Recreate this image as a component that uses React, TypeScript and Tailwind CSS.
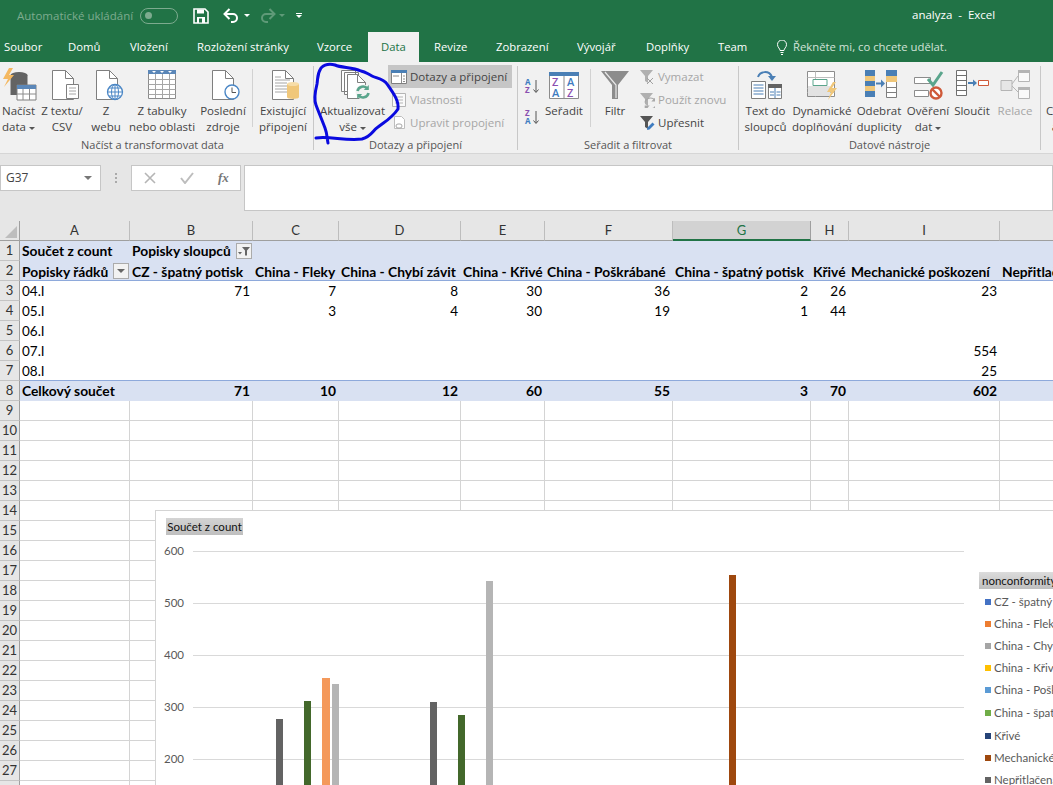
const columns = ["A", "B", "C", "D", "E", "F", "G", "H", "I", "J"];

const pivotHead = ["Popisky řádků", "CZ - špatný potisk", "China - Fleky", "China - Chybí závit", "China - Křivé", "China - Poškrábané", "China - špatný potisk", "Křivé", "Mechanické poškození", "Nepřitlačená"];

const pivotRows = [
  ["04.I", "71", "7", "8", "30", "36", "2", "26", "23", ""],
  ["05.I", "", "3", "4", "30", "19", "1", "44", "", ""],
  ["06.I", "", "", "", "", "", "", "", "", ""],
  ["07.I", "", "", "", "", "", "", "", "554", ""],
  ["08.I", "", "", "", "", "", "", "", "25", ""],
];

const totals = ["Celkový součet", "71", "10", "12", "60", "55", "3", "70", "602", ""];

const gridRows = [9, 10, 11, 12, 13, 14, 15, 16, 17, 18, 19, 20, 21, 22, 23, 24, 25, 26, 27, 28];

const legend = [
  ["CZ - špatný potisk", "#4472c4", 92],
  ["China - Fleky", "#ed7d31", 114],
  ["China - Chybí závit", "#a5a5a5", 136],
  ["China - Křivé", "#ffc000", 158],
  ["China - Poškrábané", "#5b9bd5", 180],
  ["China - špatný potisk", "#70ad47", 203],
  ["Křivé", "#264478", 226],
  ["Mechanické poškození", "#9e480e", 248],
  ["Nepřitlačená", "#636363", 270],
] as const;

const bars = [
  [121, 209, "#636363", 7],
  [149, 191, "#43682b", 7],
  [167, 168, "#f4995b", 8],
  [177, 174, "#b5b5b5", 7],
  [275, 192, "#636363", 7],
  [303, 205, "#43682b", 7],
  [331, 71, "#b5b5b5", 7],
  [574, 65, "#9e480e", 7],
] as const;

const axis = [
  ["600", 41],
  ["500", 93],
  ["400", 145],
  ["300", 197],
  ["200", 249],
] as const;

function Page({ x, y = 4, w = 21, h = 29, stroke = "#7f7f7f" }: { x: number; y?: number; w?: number; h?: number; stroke?: string }) {
  return (
    <g fill="#fff" stroke={stroke}>
      <path d={`M${x + 0.5} ${y + 0.5}h${w - 8}l8 8v${h - 8}h${-w}z`} />
      <path d={`M${x + w - 7.5} ${y + 0.5}v8h8`} fill="none" />
    </g>
  );
}

function LargeIcon({ children }: { children: React.ReactNode }) {
  return (
    <svg width="36" height="36" viewBox="0 0 36 36" className="shrink-0">
      {children}
    </svg>
  );
}

function SmallIcon({ children }: { children: React.ReactNode }) {
  return (
    <svg width="16" height="16" viewBox="0 0 16 16" className="shrink-0">
      {children}
    </svg>
  );
}

function Refresh({ cx, cy, color = "#5aa58c", width = 2.6 }: { cx: number; cy: number; color?: string; width?: number }) {
  return (
    <g transform={`translate(${cx} ${cy})`} fill="none" stroke={color} strokeWidth={width}>
      <path d="M-5.5 -1a5.6 5.6 0 0 1 10 -2.2" />
      <path d="M5.5 1a5.6 5.6 0 0 1 -10 2.2" />
      <path d="M5.8 -7v5h-5z" fill={color} stroke="none" />
      <path d="M-5.8 7v-5h5z" fill={color} stroke="none" />
    </g>
  );
}

function LargeButton({ icon, lines, w, caret, muted }: { icon: React.ReactNode; lines: string[]; w: string; caret?: boolean; muted?: boolean }) {
  return (
    <div className={`flex flex-col items-center shrink-0 ${w} ${muted ? "text-[#a6a6a6]" : "text-[#444]"}`}>
      <div className="h-[37px] flex items-start">{icon}</div>
      {lines.map((line, i) => (
        <div key={line} className="h-[16px] leading-[16px] whitespace-nowrap flex items-center">
          {line}
          {caret && i === lines.length - 1 && <span className="ml-[3px] mt-[2px] border-x-[3px] border-t-[3px] border-x-transparent border-t-[#555]" />}
        </div>
      ))}
    </div>
  );
}

function SmallButton({ icon, label, muted, active }: { icon: React.ReactNode; label: string; muted?: boolean; active?: boolean }) {
  return (
    <div className={`h-[23px] flex items-center gap-[3px] pl-[3px] whitespace-nowrap ${active ? "bg-[#c6c6c6]" : ""} ${muted ? "text-[#a6a6a6]" : "text-[#444]"}`}>
      {icon}
      <span>{label}</span>
    </div>
  );
}

function Group({ label, w, labelPad, children }: { label: string; w: string; labelPad?: string; children: React.ReactNode }) {
  return (
    <div className={`${w} shrink-0 h-[84px] flex flex-col border-r border-[#c8c8c8]`}>
      <div className="h-[72px] flex">{children}</div>
      <div className={`h-[12px] leading-[14px] text-[11px] text-center text-[#555] whitespace-nowrap ${labelPad ?? ""}`}>{label}</div>
    </div>
  );
}

function Divider() {
  return <div className="w-px h-[58px] mt-[3px] bg-[#d2d2d2] shrink-0" />;
}

function Funnel({ color = "#a6a6a6" }: { color?: string }) {
  return <path d="M1 1h13l-5 6v7l-3 -2v-5z" fill={color} />;
}

function DropButton({ filter }: { filter?: boolean }) {
  return (
    <span className="w-[16px] h-[16px] shrink-0 border border-[#ababab] bg-[#f2f2f2] flex items-center justify-center">
      {filter ? (
        <svg width="14" height="14" viewBox="0 0 14 14">
          <path d="M5 3h8l-3 3.500v5h-2v-5z" fill="#666" />
          <path d="M1 8h4l-2 2.500z" fill="#666" />
        </svg>
      ) : (
        <span className="border-x-[4px] border-t-[4px] border-x-transparent border-t-[#666]" />
      )}
    </span>
  );
}

function RowHead({ n }: { n: number }) {
  return (
    <div className="h-[20px] border-r border-b border-r-[#9f9f9f] border-b-[#c4c4c4] bg-[#e6e6e6] text-[#333] text-[13px] font-normal leading-[19px] text-center font-['Lato']">
      {n}
    </div>
  );
}

export default function App() {
  return (
    <div className="relative w-[1053px] h-[785px] overflow-hidden bg-white font-['Open_Sans',sans-serif] text-[11.5px]">
      {/* title bar */}
      <div className="h-[32px] bg-[#217346] flex items-center pb-[1px] text-white">
        <span className="ml-[17px] w-[116px] text-[#7dab8f] whitespace-nowrap">Automatické ukládání</span>
        <span className="ml-[7px] w-[38px] h-[16px] rounded-full border border-[#7dab8f] flex items-center pl-[4px]">
          <span className="w-[7px] h-[7px] rounded-full bg-[#7dab8f]" />
        </span>
        <svg width="16" height="16" viewBox="0 0 16 16" className="ml-[15px]">
          <path d="M1 1h11l3 3v11h-14z" fill="none" stroke="#fff" strokeWidth="1.600" />
          <path d="M4 1.500h7v4h-7zM4 9h8v6h-8z" fill="#fff" />
          <path d="M6 10.500h3v4h-3z" fill="#217346" />
        </svg>
        <svg width="18" height="16" viewBox="0 0 18 16" className="ml-[14px]">
          <path d="M2 6h8a4 4 0 0 1 0 8h-2" fill="none" stroke="#fff" strokeWidth="2" />
          <path d="M6.500 1l-5 5 5 5" fill="none" stroke="#fff" strokeWidth="2" />
        </svg>
        <span className="ml-[3px] border-x-[3px] border-t-[3px] border-x-transparent border-t-white" />
        <svg width="18" height="16" viewBox="0 0 18 16" className="ml-[8px]">
          <path d="M16 6h-8a4 4 0 0 0 0 8h2" fill="none" stroke="#5f9a78" strokeWidth="2" />
          <path d="M11.500 1l5 5-5 5" fill="none" stroke="#5f9a78" strokeWidth="2" />
        </svg>
        <span className="ml-[3px] border-x-[3px] border-t-[3px] border-x-transparent border-t-[#5f9a78]" />
        <span className="ml-[11px] flex flex-col items-center gap-[1px]">
          <span className="w-[6px] h-px bg-white" />
          <span className="border-x-[3px] border-t-[3px] border-x-transparent border-t-white" />
        </span>
        <span className="ml-[610px] mb-[2px] whitespace-pre">analyza  -  Excel</span>
      </div>

      {/* tabs */}
      <div className="h-[30px] bg-[#217346] flex pl-[4px] text-white text-[11.3px] leading-[30px] whitespace-nowrap">
        <div className="w-[64px]">Soubor</div>
        <div className="w-[62px]">Domů</div>
        <div className="w-[67px]">Vložení</div>
        <div className="w-[120px]">Rozložení stránky</div>
        <div className="w-[51px]">Vzorce</div>
        <div className="w-[51px] bg-[#f1f1f1] text-[#217346] text-center">Data</div>
        <div className="w-[77px] pl-[15px]">Revize</div>
        <div className="w-[81px]">Zobrazení</div>
        <div className="w-[69px]">Vývojář</div>
        <div className="w-[72px]">Doplňky</div>
        <div className="w-[59px]">Team</div>
        <div className="flex items-center gap-[6px] text-[#d3e3d9]">
          <svg width="10" height="15" viewBox="0 0 10 15">
            <path d="M3 10.500c0-2-2.500-3-2.500-6a4.500 4.500 0 0 1 9 0c0 3-2.500 4-2.500 6z" fill="none" stroke="#fff" />
            <path d="M3.500 12.500h3M4 14.500h2" stroke="#fff" />
          </svg>
          Řekněte mi, co chcete udělat.
        </div>
      </div>

      {/* ribbon */}
      <div className="h-[92px] bg-[#f1f1f1] border-b border-[#d6d6d6] pt-[4px] flex overflow-hidden">
        <Group label="Načíst a transformovat data" w="w-[314px]" labelPad="pr-[8px]">
          <LargeButton
            w="w-[37px]"
            lines={["Načíst", "data"]}
            caret
            icon={
              <LargeIcon>
                <ellipse cx="18" cy="9" rx="8.500" ry="3" fill="#636363" />
                <path d="M9.500 9v20h17v-20z" fill="#636363" />
                <path d="M8 2l-6 11h5l-4 8 10-12h-5l4-7z" fill="#f4b860" />
                <path d="M16 19h19v15h-19z" fill="#fff" stroke="#7f7f7f" />
                <path d="M16 19h19v4h-19z" fill="#5b87b8" />
                <path d="M16 28h19M22 23v11M28.500 23v11" stroke="#8c8c8c" />
              </LargeIcon>
            }
          />
          <LargeButton
            w="w-[50px]"
            lines={["Z textu/", "CSV"]}
            icon={
              <LargeIcon>
                <Page x={8} />
                <path d="M22.500 18.500h12v14h-12z" fill="#fff" stroke="#7f7f7f" />
                <path d="M25 22h7M25 25h7M25 28h7" stroke="#a6a6a6" />
              </LargeIcon>
            }
          />
          <LargeButton
            w="w-[38px]"
            lines={["Z", "webu"]}
            icon={
              <LargeIcon>
                <Page x={8} />
                <circle cx="27" cy="26" r="7.500" fill="#fff" stroke="#4a86c5" strokeWidth="1.300" />
                <path d="M19.500 26h15M27 18.500v15M21 22h12M21 30h12" stroke="#4a86c5" />
                <ellipse cx="27" cy="26" rx="3.500" ry="7.500" fill="none" stroke="#4a86c5" />
              </LargeIcon>
            }
          />
          <LargeButton
            w="w-[74px]"
            lines={["Z tabulky", "nebo oblasti"]}
            icon={
              <LargeIcon>
                <path d="M4.500 4.500h27v28h-27z" fill="#fff" stroke="#8c8c8c" />
                <path d="M4 4h28v4h-28z" fill="#5b87b8" />
                <path d="M8 5h4l-2 2zM16 5h4l-2 2zM24 5h4l-2 2z" fill="#fff" />
                <path d="M4.500 13.500h27M4.500 18.500h27M4.500 23.500h27M4.500 28.500h27M11.500 8v24M18.500 8v24M25.500 8v24" stroke="#a6a6a6" />
              </LargeIcon>
            }
          />
          <LargeButton
            w="w-[48px]"
            lines={["Poslední", "zdroje"]}
            icon={
              <LargeIcon>
                <Page x={7} />
                <circle cx="27" cy="26" r="7" fill="#fff" stroke="#4a86c5" strokeWidth="1.400" />
                <path d="M27 21.500v5h4" fill="none" stroke="#555" />
              </LargeIcon>
            }
          />
          <div className="w-[5px]" />
          <Divider />
          <div className="w-[4px]" />
          <LargeButton
            w="w-[52px]"
            lines={["Existující", "připojení"]}
            icon={
              <LargeIcon>
                <Page x={7} />
                <path d="M10 11h6M10 14h15M10 17h12M10 20h12M10 23h12M10 26h12" stroke="#a6a6a6" />
                <path d="M22 18v13c0 2.500 12 2.500 12 0v-13z" fill="#f0c77a" />
                <ellipse cx="28" cy="18" rx="6" ry="2" fill="#f7dda8" />
              </LargeIcon>
            }
          />
        </Group>

        <Group label="Dotazy a připojení" w="w-[204px]">
          <div className="w-[4px]" />
          <LargeButton
            w="w-[69px]"
            lines={["Aktualizovat", "vše"]}
            caret
            icon={
              <LargeIcon>
                <path d="M6.500 4.500h14v21h-14zM9.500 6.500h14v22h-14z" fill="#fff" stroke="#7f7f7f" />
                <Page x={12} y={8} w={18} h={24} />
                <circle cx="28" cy="26" r="7.500" fill="#f1f1f1" />
                <Refresh cx={28} cy={26} />
              </LargeIcon>
            }
          />
          <div className="w-[124px] -mt-[1px] ml-[1px]">
            <SmallButton
              active
              label="Dotazy a připojení"
              icon={
                <SmallIcon>
                  <path d="M.500 1.500h15v13h-15z" fill="#fff" stroke="#7f7f7f" />
                  <path d="M0 1h16v3h-16z" fill="#4a7fb5" />
                  <path d="M10.500 4v10M2 7h6M12 7h2M12 10h2M12 12.500h2" stroke="#8c8c8c" />
                </SmallIcon>
              }
            />
            <SmallButton
              muted
              label="Vlastnosti"
              icon={
                <SmallIcon>
                  <path d="M1.500 1.500h13v13h-13z" fill="#fafafa" stroke="#b5b5b5" />
                  <path d="M4 5h8M4 8h8M4 11h8" stroke="#b5b5b5" />
                </SmallIcon>
              }
            />
            <SmallButton
              muted
              label="Upravit propojení"
              icon={
                <SmallIcon>
                  <path d="M3.500 1.500h7l3 3v9h-10z" fill="#fff" stroke="#bdbdbd" />
                  <path d="M5 11a2 2 0 0 1 2-2h2a2 2 0 0 1 0 4h-2a2 2 0 0 1-2-2z" fill="none" stroke="#a6a6a6" />
                </SmallIcon>
              }
            />
          </div>
        </Group>

        <Group label="Seřadit a filtrovat" w="w-[221px]">
          <div className="w-[6px]" />
          <div className="w-[22px] shrink-0 flex flex-col gap-[15px] pt-[12px]">
            <svg width="16" height="16" viewBox="0 0 16 16" className="font-['Open_Sans']">
              <text x="1" y="7" fontSize="8" fontWeight="700" fill="#3f7cc0">A</text>
              <text x="1" y="15" fontSize="8" fontWeight="700" fill="#8a4fb0">Z</text>
              <path d="M12 2v12M9.500 11.500l2.500 3 2.500-3" fill="none" stroke="#555" />
            </svg>
            <svg width="16" height="16" viewBox="0 0 16 16" className="font-['Open_Sans']">
              <text x="1" y="7" fontSize="8" fontWeight="700" fill="#8a4fb0">Z</text>
              <text x="1" y="15" fontSize="8" fontWeight="700" fill="#3f7cc0">A</text>
              <path d="M12 2v12M9.500 11.500l2.500 3 2.500-3" fill="none" stroke="#555" />
            </svg>
          </div>
          <LargeButton
            w="w-[36px]"
            lines={["Seřadit"]}
            icon={
              <svg width="30" height="36" viewBox="0 0 30 36" className="font-['Open_Sans']">
                <path d="M.500 6.500h29v26h-29zM15 8v24" fill="#fff" stroke="#8c8c8c" />
                <path d="M0 6h30v4h-30z" fill="#4a7fb5" />
                <text x="3" y="20" fontSize="11" fontWeight="600" fill="#8a4fb0">Z</text>
                <text x="3" y="31" fontSize="11" fontWeight="600" fill="#3f7cc0">A</text>
                <text x="18" y="20" fontSize="11" fontWeight="600" fill="#3f7cc0">A</text>
                <text x="18" y="31" fontSize="11" fontWeight="600" fill="#8a4fb0">Z</text>
              </svg>
            }
          />
          <div className="w-[8px]" />
          <Divider />
          <LargeButton
            w="w-[48px]"
            lines={["Filtr"]}
            icon={
              <LargeIcon>
                <path d="M4 5h28l-11 14v14h-6v-14z" fill="#8c8c8c" />
                <path d="M8 6l11 13v13" fill="none" stroke="#e8e8e8" strokeWidth="1.200" />
              </LargeIcon>
            }
          />
          <div className="w-[96px] -mt-[1px] -ml-[3px]">
            <SmallButton
              muted
              label="Vymazat"
              icon={
                <SmallIcon>
                  <Funnel color="#b0b0b0" />
                  <path d="M8 9l6 6M14 9l-6 6" stroke="#a0a0a0" />
                </SmallIcon>
              }
            />
            <SmallButton
              muted
              label="Použít znovu"
              icon={
                <SmallIcon>
                  <Funnel color="#b0b0b0" />
                  <Refresh cx={11.500} cy={11.500} color="#a8a8a8" width={1.200} />
                </SmallIcon>
              }
            />
            <SmallButton
              label="Upřesnit"
              icon={
                <SmallIcon>
                  <Funnel color="#555" />
                  <path d="M8 15l.5-2.500 5-5 2 2-5 5z" fill="#3f7cc0" />
                </SmallIcon>
              }
            />
          </div>
        </Group>

        <Group label="Datové nástroje" w="w-[302px]">
          <LargeButton
            w="w-[53px]"
            lines={["Text do", "sloupců"]}
            icon={
              <LargeIcon>
                <path d="M3.500 15.500h14v17h-14z" fill="#fff" stroke="#7f7f7f" />
                <path d="M5.500 19h10M5.500 22h10M5.500 25h10M5.500 28h10" stroke="#4a7fb5" />
                <path d="M20.500 18.500h13v14h-13z" fill="#fff" stroke="#7f7f7f" />
                <path d="M20 18h14v4h-14z" fill="#636363" />
                <path d="M27 22v10M22 26h4M22 29h4M28.500 26h4M28.500 29h4" stroke="#4a7fb5" />
                <path d="M10 11c2-6 11-7 14 0" fill="none" stroke="#4a7fb5" strokeWidth="2" />
                <path d="M20 10h8l-4 5z" fill="#4a7fb5" />
              </LargeIcon>
            }
          />
          <LargeButton
            w="w-[60px]"
            lines={["Dynamické", "doplňování"]}
            icon={
              <LargeIcon>
                <path d="M3.500 5.500h27v25h-27z" fill="#fff" stroke="#8c8c8c" />
                <path d="M3.500 11.500h27M3.500 22.500h27M3.500 26.500h27M11.500 5.500v25" stroke="#bdbdbd" />
                <path d="M9 13.500h14v6h-14z" fill="#fff" stroke="#5aa58c" />
                <path d="M4 20h22v10h-22z" fill="#e2e2e2" />
                <path d="M29 16l-6 10h4l-3 8 9-12h-5l4-6z" fill="#f0c77a" />
              </LargeIcon>
            }
          />
          <LargeButton
            w="w-[54px]"
            lines={["Odebrat", "duplicity"]}
            icon={
              <LargeIcon>
                <path d="M4 4h10v27h-10z" fill="#4a7fb5" />
                <path d="M4 10h10v5h-10zM4 20h10v5h-10z" fill="#f0c77a" />
                <path d="M25.500 4.500h10v27h-10z" fill="#fff" stroke="#7f7f7f" />
                <path d="M25 4h11v6h-11z" fill="#4a7fb5" />
                <path d="M25 10h11v6h-11z" fill="#f0c77a" />
                <path d="M26 21.500h10M26 26.500h10" stroke="#7f7f7f" />
                <path d="M15 17.500h6" stroke="#4a7fb5" strokeWidth="2" />
                <path d="M20 13.500l4 4-4 4z" fill="#4a7fb5" />
              </LargeIcon>
            }
          />
          <LargeButton
            w="w-[44px]"
            lines={["Ověření", "dat"]}
            caret
            icon={
              <LargeIcon>
                <path d="M4.500 11.500h16v6h-16zM4.500 24.500h14v6h-14z" fill="#fff" stroke="#8c8c8c" />
                <path d="M18 13l5 6 9-13" fill="none" stroke="#5aa58c" strokeWidth="3" />
                <circle cx="26" cy="27" r="5.500" fill="#fff" stroke="#cf5a3a" strokeWidth="2.400" />
                <path d="M22 23l8 8" stroke="#cf5a3a" strokeWidth="2.400" />
              </LargeIcon>
            }
          />
          <LargeButton
            w="w-[44px]"
            lines={["Sloučit"]}
            icon={
              <LargeIcon>
                <path d="M2.500 4.500h10v25h-10zM2.500 9.500h10M2.500 14.500h10M2.500 19.500h10M2.500 24.500h10" fill="#fff" stroke="#6f6f6f" />
                <path d="M14 17h6" stroke="#4a7fb5" strokeWidth="2" />
                <path d="M19 13.500l4 3.500-4 3.500z" fill="#4a7fb5" />
                <path d="M24.500 14.500h10v5h-10z" fill="#fff" stroke="#cf5a3a" />
              </LargeIcon>
            }
          />
          <LargeButton
            w="w-[42px]"
            muted
            lines={["Relace"]}
            icon={
              <LargeIcon>
                <path d="M4 14.500h11v10h-11z" fill="#e6e6e6" stroke="#b5b5b5" />
                <path d="M21.500 4.500h11v11h-11zM21.500 21.500h11v11h-11z" fill="#fafafa" stroke="#b5b5b5" />
                <path d="M21 4h12v3h-12zM21 21h12v3h-12z" fill="#b5b5b5" />
                <path d="M15 18l6-8M15 20l6 6" stroke="#b5b5b5" />
              </LargeIcon>
            }
          />
        </Group>

        <div className="w-[62px] shrink-0 flex flex-col items-center text-[#444] pt-[37px]">
          <div className="h-[16px] leading-[16px] whitespace-nowrap">Citlivostní</div>
          <div className="h-[16px] leading-[16px] whitespace-nowrap">analýza</div>
        </div>
      </div>

      {/* formula bar */}
      <div className="h-[67px] bg-[#e6e6e6] flex items-start pt-[11px]">
        <div className="w-[101px] h-[26px] bg-white border border-[#c6c6c6] flex items-center justify-between pl-[5px] pr-[8px] text-[#444] text-[12px]">
          G37
          <span className="border-x-[4px] border-t-[4px] border-x-transparent border-t-[#777]" />
        </div>
        <div className="w-[30px] h-[26px] flex flex-col items-center justify-center gap-[2px]">
          <span className="w-[2px] h-[2px] bg-[#aaa]" />
          <span className="w-[2px] h-[2px] bg-[#aaa]" />
          <span className="w-[2px] h-[2px] bg-[#aaa]" />
        </div>
        <div className="w-[110px] h-[26px] bg-white border border-[#c6c6c6] flex items-center text-[#9a9a9a]">
          <svg width="12" height="12" viewBox="0 0 12 12" className="ml-[12px]">
            <path d="M1 1l10 10M11 1l-10 10" stroke="#b5b5b5" strokeWidth="1.600" />
          </svg>
          <svg width="14" height="12" viewBox="0 0 14 12" className="ml-[24px]">
            <path d="M1 6l4 5 8-10" fill="none" stroke="#bdbdbd" strokeWidth="2" />
          </svg>
          <span className="ml-[24px] font-['Liberation_Serif'] italic font-bold text-[13px] text-[#777]">fx</span>
        </div>
        <div className="ml-[3px] flex-1 h-[46px] bg-white border border-[#c6c6c6]" />
      </div>

      {/* sheet */}
      <div className="grid grid-cols-[20px_110px_123px_86px_122px_84px_128px_138px_38px_151px_140px] auto-rows-[20px] font-['Lato'] text-[13.5px] text-black">
        <div className="h-[20px] bg-[#e6e6e6] border-r border-b border-[#9f9f9f] flex items-end justify-end p-[2px]">
          <span className="w-0 h-0 border-l-[12px] border-l-transparent [border-bottom:12px_solid_#bdbdbd]" />
        </div>
        {columns.map((c) =>
          c === "G" ? (
            <div key={c} className="h-[20px] bg-[#d2d2d2] border-r border-r-[#9f9f9f] border-b-2 border-b-[#217346] text-[#217346] text-center leading-[19px] text-[13px]">
              {c}
            </div>
          ) : (
            <div key={c} className="h-[20px] bg-[#e6e6e6] border-r border-b border-r-[#bdbdbd] border-b-[#9f9f9f] text-[#333] text-center leading-[19px] text-[13px]">
              {c}
            </div>
          )
        )}

        <RowHead n={1} />
        <div className="bg-[#d9e1f2] font-bold text-[13.8px] leading-[20px] pl-[2px] whitespace-nowrap">Součet z count</div>
        <div className="bg-[#d9e1f2] font-bold text-[13.8px] leading-[20px] pl-[2px] whitespace-nowrap flex items-center justify-between pr-[1px]">
          Popisky sloupců
          <DropButton filter />
        </div>
        <div className="col-span-8 bg-[#d9e1f2]" />

        <RowHead n={2} />
        {pivotHead.map((text, i) => (
          <div key={text} className="bg-[#d9e1f2] border-b border-[#8ea9db] font-bold text-[13.8px] leading-[19px] pl-[2px] whitespace-nowrap overflow-hidden flex items-center justify-between pr-[1px]">
            <span className="mt-[1px]">{text}</span>
            {i === 0 && <DropButton />}
          </div>
        ))}

        {pivotRows.map((row, r) => (
          <div key={row[0]} className="contents">
            <RowHead n={r + 3} />
            {row.map((value, i) => (
              <div key={i} className={`leading-[21px] pl-[2px] pr-[3px] ${i === 0 ? "text-left" : "text-right"} ${r === 4 ? "border-b border-[#8ea9db]" : ""}`}>
                {value}
              </div>
            ))}
          </div>
        ))}

        <RowHead n={8} />
        {totals.map((value, i) => (
          <div key={i} className={`bg-[#d9e1f2] font-bold text-[13.8px] leading-[20px] pl-[2px] pr-[3px] whitespace-nowrap ${i === 0 ? "text-left" : "text-right"}`}>
            {value}
          </div>
        ))}

        {gridRows.map((n) => (
          <div key={n} className="contents">
            <RowHead n={n} />
            {columns.map((c) => (
              <div key={c} className="border-r border-b border-[#d4d4d4]" />
            ))}
          </div>
        ))}
      </div>

      {/* chart floats above the sheet */}
      <div className="absolute left-[155px] top-[510px] w-[910px] h-[290px] bg-white border-l border-t border-[#d4d4d4] font-['Lato'] text-[11.5px]">
        <div className="absolute left-[10px] top-[7px] h-[17px] w-[77px] bg-gradient-to-b from-[#d4d4d4] to-[#bfbfbf] leading-[17px] text-center text-[#111] whitespace-nowrap">
          Součet z count
        </div>
        <div className="absolute left-[823px] top-[61px] h-[17px] w-[80px] bg-gradient-to-b from-[#dcdcdc] to-[#bfbfbf] leading-[17px] pl-[3px] text-[#111] whitespace-nowrap">
          nonconformity
        </div>
        <svg width="910" height="290" viewBox="0 0 910 290" className="block -ml-px -mt-px" fontFamily="Lato">
          {axis.map(([label, y]) => (
            <g key={label}>
              <line x1="38" x2="809" y1={y + 0.5} y2={y + 0.5} stroke="#d9d9d9" />
              <text x="9" y={y + 4} fontSize="11.500" fill="#595959">{label}</text>
            </g>
          ))}
          {bars.map(([x, y, color, w]) => (
            <rect key={x} x={x} y={y} width={w} height={290 - y} fill={color} />
          ))}
          {legend.map(([label, color, y]) => (
            <g key={label}>
              <rect x="830" y={y - 3} width="6" height="6" fill={color} />
              <text x="839" y={y + 4} fontSize="11.500" fill="#595959">{label}</text>
            </g>
          ))}
        </svg>
      </div>

      {/* hand-drawn marker ring */}
      <svg width="1053" height="785" viewBox="0 0 1053 785" className="absolute left-0 top-0 pointer-events-none">
        <path
          d="M316 138C330 136 345 141 362 139C372 136 372 131 378 127C386 121 392 118 398 109C399 101 394 94 387 84C384 79 376 78 372 76C366 73 366 72 361 71C352 67 342 68 335 65C328 63 324 65 321 68C317 74 318 78 317 84C315 92 314 100 316 105C319 113 322 120 325 128C327 133 327 138 328 143"
          fill="none"
          stroke="#0a0adf"
          strokeWidth="3"
          strokeLinecap="round"
          strokeLinejoin="round"
        />
      </svg>
    </div>
  );
}
